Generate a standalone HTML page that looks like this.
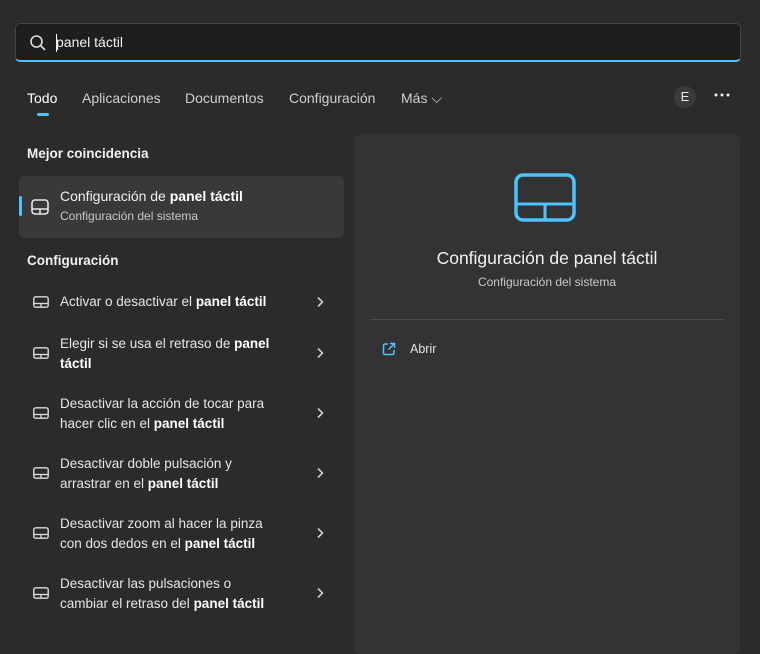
<!DOCTYPE html>
<html><head><meta charset="utf-8"><style>
*{margin:0;padding:0;box-sizing:border-box}
body{width:760px;height:635px;background:#2b2b2b;font-family:"Segoe UI","Liberation Sans",sans-serif;color:#e8e8e8;position:relative;overflow:hidden;font-size:13.5px}
.search{position:absolute;left:15px;top:23px;width:726px;height:39px;background:#1e1e1e;border:1px solid #444;border-bottom:2px solid #4cc2ff;border-radius:5px}
.search .txt{position:absolute;left:40px;top:10px;font-size:14px;color:#f0f0f0}
.search .caret{position:absolute;left:40px;top:10px;width:1px;height:18px;background:#fff}
.tabs span{position:absolute;top:90px;font-size:14px;color:#cfcfcf}
.ind{position:absolute;left:37px;top:113px;width:12px;height:3px;border-radius:2px;background:#4cc2ff}
.h{position:absolute;left:27px;font-weight:bold;font-size:13.5px;color:#f0f0f0}
.best{position:absolute;left:19px;top:176px;width:325px;height:62px;background:#393939;border-radius:5px}
.best .bar{position:absolute;left:0;top:20px;width:3px;height:20px;background:#4cc2ff;border-radius:2px}
.item{position:absolute;left:60px;line-height:20px;color:#e6e6e6;width:250px;white-space:nowrap}
.ic{position:absolute;left:33px;width:16px;height:12px}
.chev{position:absolute;left:316px;width:8px;height:12px}
.right{position:absolute;left:354px;top:134px;width:386px;height:520px;background:#333333;border-radius:7px}
b{font-weight:bold;color:#fff}
</style></head><body>
<div class="search">
<svg style="position:absolute;left:13px;top:10px" width="18" height="18" viewBox="0 0 18 18"><circle cx="7.5" cy="7.5" r="5.5" fill="none" stroke="#ddd" stroke-width="1.6"/><line x1="11.5" y1="11.5" x2="16" y2="16" stroke="#ddd" stroke-width="1.6"/></svg>
<div class="caret"></div><div class="txt">panel táctil</div></div>
<div class="tabs"><span style="left:27px;color:#fff">Todo</span><span style="left:82px">Aplicaciones</span><span style="left:185px">Documentos</span><span style="left:289px">Configuración</span><span style="left:401px">Más ⌵</span></div>
<div class="ind"></div>
<div style="position:absolute;left:674px;top:86px;width:22px;height:22px;border-radius:50%;background:#3a3a3a;text-align:center;line-height:22px;font-size:13px">E</div>
<svg style="position:absolute;left:714px;top:93px" width="16" height="4" viewBox="0 0 16 4"><circle cx="2" cy="2" r="1.5" fill="#eee"/><circle cx="8" cy="2" r="1.5" fill="#eee"/><circle cx="14" cy="2" r="1.5" fill="#eee"/></svg>
<div class="h" style="top:146px">Mejor coincidencia</div>
<div class="best"><div class="bar"></div>
<svg style="position:absolute;left:12px;top:23px" width="18" height="16" viewBox="0 0 18 16"><rect x="1" y="1" width="16" height="14" rx="3" fill="none" stroke="#e8e8e8" stroke-width="1.6"/><line x1="1" y1="10" x2="17" y2="10" stroke="#e8e8e8" stroke-width="1.5"/><line x1="9" y1="10" x2="9" y2="15" stroke="#e8e8e8" stroke-width="1.5"/></svg>
<div style="position:absolute;left:41px;top:12px;font-size:14px;color:#f0f0f0">Configuración de <b>panel táctil</b></div>
<div style="position:absolute;left:41px;top:33px;font-size:12px;color:#c8c8c8">Configuración del sistema</div></div>
<div class="h" style="top:253px">Configuración</div>

<svg class="ic" style="top:296px" viewBox="0 0 16 12"><rect x=".8" y=".8" width="14.4" height="10.4" rx="2" fill="none" stroke="#ddd" stroke-width="1.4"/><line x1="1" y1="7.5" x2="15" y2="7.5" stroke="#ddd" stroke-width="1.3"/><line x1="8" y1="7.5" x2="8" y2="11" stroke="#ddd" stroke-width="1.3"/></svg>
<div class="item" style="top:292px">Activar o desactivar el <b>panel táctil</b></div><svg class="chev" style="top:296px" viewBox="0 0 8 12"><path d="M2 1.5L6.5 6 2 10.5" fill="none" stroke="#ccc" stroke-width="1.6"/></svg>

<svg class="ic" style="top:347px" viewBox="0 0 16 12"><rect x=".8" y=".8" width="14.4" height="10.4" rx="2" fill="none" stroke="#ddd" stroke-width="1.4"/><line x1="1" y1="7.5" x2="15" y2="7.5" stroke="#ddd" stroke-width="1.3"/><line x1="8" y1="7.5" x2="8" y2="11" stroke="#ddd" stroke-width="1.3"/></svg>
<div class="item" style="top:334px">Elegir si se usa el retraso de <b>panel</b><br><b>táctil</b></div><svg class="chev" style="top:347px" viewBox="0 0 8 12"><path d="M2 1.5L6.5 6 2 10.5" fill="none" stroke="#ccc" stroke-width="1.6"/></svg>

<svg class="ic" style="top:407px" viewBox="0 0 16 12"><rect x=".8" y=".8" width="14.4" height="10.4" rx="2" fill="none" stroke="#ddd" stroke-width="1.4"/><line x1="1" y1="7.5" x2="15" y2="7.5" stroke="#ddd" stroke-width="1.3"/><line x1="8" y1="7.5" x2="8" y2="11" stroke="#ddd" stroke-width="1.3"/></svg>
<div class="item" style="top:394px">Desactivar la acción de tocar para<br>hacer clic en el <b>panel táctil</b></div><svg class="chev" style="top:407px" viewBox="0 0 8 12"><path d="M2 1.5L6.5 6 2 10.5" fill="none" stroke="#ccc" stroke-width="1.6"/></svg>

<svg class="ic" style="top:467px" viewBox="0 0 16 12"><rect x=".8" y=".8" width="14.4" height="10.4" rx="2" fill="none" stroke="#ddd" stroke-width="1.4"/><line x1="1" y1="7.5" x2="15" y2="7.5" stroke="#ddd" stroke-width="1.3"/><line x1="8" y1="7.5" x2="8" y2="11" stroke="#ddd" stroke-width="1.3"/></svg>
<div class="item" style="top:454px">Desactivar doble pulsación y<br>arrastrar en el <b>panel táctil</b></div><svg class="chev" style="top:467px" viewBox="0 0 8 12"><path d="M2 1.5L6.5 6 2 10.5" fill="none" stroke="#ccc" stroke-width="1.6"/></svg>

<svg class="ic" style="top:527px" viewBox="0 0 16 12"><rect x=".8" y=".8" width="14.4" height="10.4" rx="2" fill="none" stroke="#ddd" stroke-width="1.4"/><line x1="1" y1="7.5" x2="15" y2="7.5" stroke="#ddd" stroke-width="1.3"/><line x1="8" y1="7.5" x2="8" y2="11" stroke="#ddd" stroke-width="1.3"/></svg>
<div class="item" style="top:514px">Desactivar zoom al hacer la pinza<br>con dos dedos en el <b>panel táctil</b></div><svg class="chev" style="top:527px" viewBox="0 0 8 12"><path d="M2 1.5L6.5 6 2 10.5" fill="none" stroke="#ccc" stroke-width="1.6"/></svg>

<svg class="ic" style="top:587px" viewBox="0 0 16 12"><rect x=".8" y=".8" width="14.4" height="10.4" rx="2" fill="none" stroke="#ddd" stroke-width="1.4"/><line x1="1" y1="7.5" x2="15" y2="7.5" stroke="#ddd" stroke-width="1.3"/><line x1="8" y1="7.5" x2="8" y2="11" stroke="#ddd" stroke-width="1.3"/></svg>
<div class="item" style="top:574px">Desactivar las pulsaciones o<br>cambiar el retraso del <b>panel táctil</b></div><svg class="chev" style="top:587px" viewBox="0 0 8 12"><path d="M2 1.5L6.5 6 2 10.5" fill="none" stroke="#ccc" stroke-width="1.6"/></svg>

<div class="right">
<svg style="position:absolute;left:160px;top:39px" width="64" height="50" viewBox="0 0 64 50"><rect x="2" y="2" width="58" height="45" rx="7" fill="none" stroke="#4cc2ff" stroke-width="3.5"/><line x1="2" y1="31" x2="60" y2="31" stroke="#4cc2ff" stroke-width="3"/><line x1="31" y1="31" x2="31" y2="47" stroke="#4cc2ff" stroke-width="3"/></svg>
<div style="position:absolute;left:0;width:386px;top:114px;text-align:center;font-size:17.5px;color:#f2f2f2">Configuración de panel táctil</div>
<div style="position:absolute;left:0;width:386px;top:141px;text-align:center;font-size:12px;color:#c8c8c8">Configuración del sistema</div>
<div style="position:absolute;left:16px;top:185px;width:354px;height:1px;background:#4a4a4a"></div>
<svg style="position:absolute;left:28px;top:208px" width="14" height="14" viewBox="0 0 14 14"><path d="M6 2H3a1.5 1.5 0 0 0-1.5 1.5v7.5A1.5 1.5 0 0 0 3 12.5h7.5A1.5 1.5 0 0 0 12 11V8M8 1.5h4.5V6M12.5 1.5L6.5 7.5" fill="none" stroke="#4cc2ff" stroke-width="1.5"/></svg>
<div style="position:absolute;left:56px;top:208px;font-size:12.5px;color:#e0e0e0">Abrir</div>
</div>
</body></html>
